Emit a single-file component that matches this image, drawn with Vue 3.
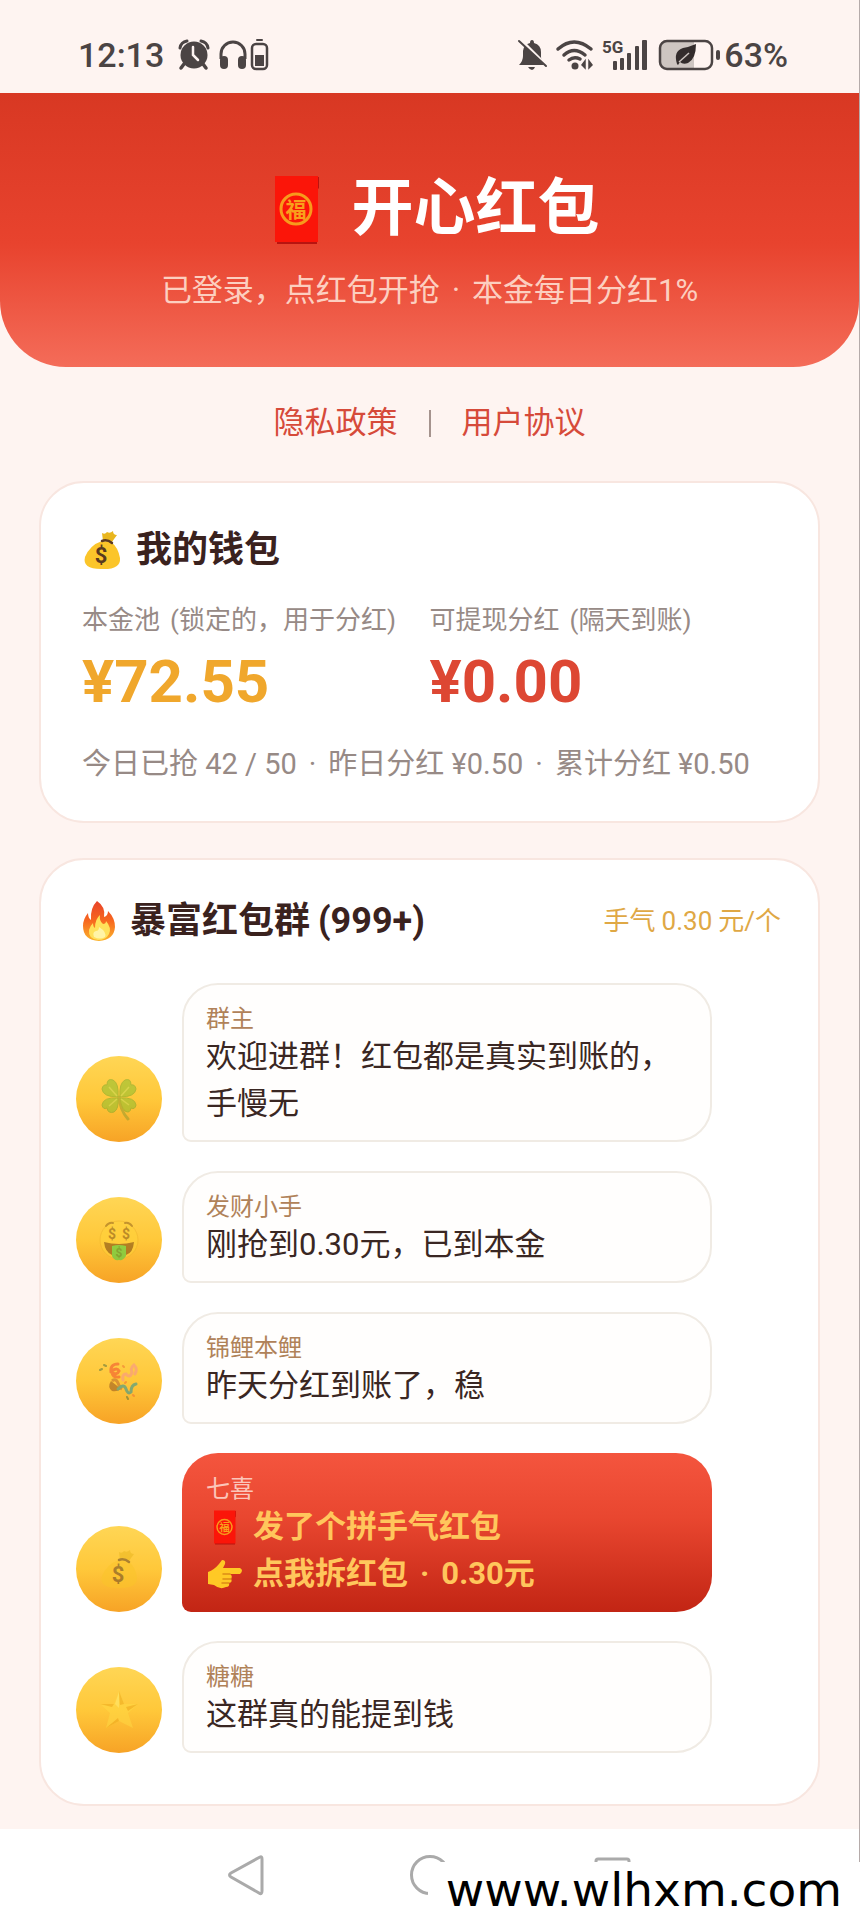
<script setup>
const messages = [
  { id: 1, name: '群主', icon: 'clover', text: '欢迎进群！红包都是真实到账的，手慢无' },
  { id: 2, name: '发财小手', icon: 'money-face', text: '刚抢到0.30元，已到本金' },
  { id: 3, name: '锦鲤本鲤', icon: 'party', text: '昨天分红到账了，稳' },
  { id: 4, name: '七喜', icon: 'bag', packet: true },
  { id: 5, name: '糖糖', icon: 'star', text: '这群真的能提到钱' },
]
</script>

<template>
  <div class="page" lang="zh-CN">
    <svg class="defs" width="0" height="0" aria-hidden="true">
      <defs>
        <linearGradient id="flameOuter" x1="0" y1="0" x2="0" y2="1">
          <stop offset="0" stop-color="#e8432a" />
          <stop offset=".5" stop-color="#f7681f" />
          <stop offset="1" stop-color="#fbb32c" />
        </linearGradient>
        <symbol id="envelope" viewBox="0 0 76 76">
          <path d="M18 6H60V17L58 19V73H18Z" fill="#b81410" />
          <rect x="16" y="5" width="43" height="66" fill="#fb1509" />
          <circle cx="37" cy="38" r="15" fill="none" stroke="#f79a1c" stroke-width="3" />
          <text x="37" y="46" text-anchor="middle" font-size="21" font-weight="700" fill="#f9a01b">福</text>
        </symbol>
        <symbol id="bag" viewBox="0 0 40 40">
          <path d="M21 11L20 3Q23 5 25 2Q28 4 31 1Q31 5 35 5Q32 9 30 12Z" fill="#e9b61e" />
          <path d="M20 11Q8 15 3 27Q0 39 19 39Q39 40 38 28Q36 17 29 12Z" fill="#fbc52a" />
          <path d="M20 11Q25 9 30 13" fill="none" stroke="#5b3a22" stroke-width="2.5" stroke-linecap="round" />
          <text x="19" y="33" text-anchor="middle" font-size="22" font-weight="700" fill="#59391f">$</text>
        </symbol>
        <symbol id="clover" viewBox="0 0 40 44">
          <path d="M20 20Q21 33 29 42" fill="none" stroke="#8e9a2d" stroke-width="3" stroke-linecap="round" />
          <g fill="#7fc02e" stroke="#6aa528" stroke-width="1">
            <path d="M19 20Q4 20 3 12Q4 7 8 8Q8 1 14 3Q20 6 19 20Z" />
            <path d="M21 20Q36 20 37 12Q36 7 32 8Q32 1 26 3Q20 6 21 20Z" />
            <path d="M19 21Q4 20 3 28Q4 33 8 31Q9 37 15 35Q20 32 19 21Z" />
            <path d="M21 21Q36 20 37 28Q36 33 32 31Q31 37 26 34Q22 30 21 21Z" />
          </g>
          <g fill="none" stroke="#b4dc58" stroke-width="1.5">
            <path d="M18 19L10 10M22 19L30 10M18 22L10 29M22 22L30 28" />
          </g>
        </symbol>
        <symbol id="money-face" viewBox="0 0 40 44">
          <circle cx="20" cy="22" r="19" fill="#ffd43a" stroke="#efb52b" />
          <path d="M7 8Q10 4 14 5M26 5Q30 4 33 8" fill="none" stroke="#8a5a17" stroke-width="2" stroke-linecap="round" />
          <text x="13" y="21" text-anchor="middle" font-size="14" font-weight="700" fill="#7a4d12">$</text>
          <text x="27" y="21" text-anchor="middle" font-size="14" font-weight="700" fill="#7a4d12">$</text>
          <path d="M5 24Q20 28 35 24Q34 35 27 37H13Q6 34 5 24Z" fill="#6b3b0e" />
          <path d="M13 28Q20 26 27 28V38Q24 43 20 42Q15 43 13 38Z" fill="#25d94a" />
          <text x="20" y="39" text-anchor="middle" font-size="12" font-weight="700" fill="#0f8d2b">$</text>
        </symbol>
        <symbol id="party" viewBox="0 0 40 40">
          <path d="M12 20Q8 26 13 30Q18 31 22 28Z" fill="#8a4a1d" />
          <path d="M13 20Q17 17 19 22T23 28" fill="none" stroke="#b5602c" stroke-width="3" />
          <path d="M19 3Q11 3 12 11Q18 15 20 10Q18 6 13 10Q13 17 20 16" fill="none" stroke="#f0402c" stroke-width="3" stroke-linecap="round" />
          <path d="M24 19Q23 13 27 13Q31 18 33 11Q31 7 35 4Q39 8 36 13" fill="none" stroke="#f78a9c" stroke-width="3" stroke-linecap="round" />
          <path d="M19 28Q25 22 27 28T32 31Q32 24 37 23" fill="none" stroke="#0b8fa9" stroke-width="3" stroke-linecap="round" />
          <path d="M5 4L7 5M1 9L3 8M28 36L29 38" stroke="#4b6b3c" stroke-width="2" stroke-linecap="round" />
          <path d="M24 5L25 6M26 22L27 21M34 34L35 35" stroke="#ee6b32" stroke-width="2" stroke-linecap="round" />
        </symbol>
        <symbol id="star" viewBox="0 0 40 40">
          <path d="M20 1L25 14L39 14L29 23L34 38L20 31L7 38L11 23L1 14L15 14Z" fill="#ffda44" />
          <path d="M20 1L21 15L25 14ZM39 14L27 17L29 21ZM1 14L13 17L15 14ZM7 38L19 28L20 31Z" fill="#edaa1c" />
          <path d="M20 2V18L16 14Z" fill="#fff27b" />
        </symbol>
      </defs>
    </svg>

    <div class="status">
      <div class="status-group">
        <span class="clock">12:13</span>
        <svg width="32" height="32" viewBox="0 0 32 32" aria-label="闹钟">
          <path d="M6 25L3 29M25 25L28 29" stroke="#4b4444" stroke-width="3.5" stroke-linecap="round" />
          <path d="M2 9Q3 3 9 2M23 2Q29 3 30 9" fill="none" stroke="#4b4444" stroke-width="3" stroke-linecap="round" />
          <circle cx="16" cy="16" r="13.5" fill="#4b4444" />
          <path d="M15 8V16L20 21" fill="none" stroke="#fef4f1" stroke-width="2.5" stroke-linecap="round" />
        </svg>
        <svg class="headset" width="50" height="32" viewBox="0 0 50 32" aria-label="耳机电量">
          <path d="M2 20V15A12 12 0 0 1 26 15V20" fill="none" stroke="#4b4444" stroke-width="3" />
          <rect x="1" y="17" width="8" height="13" rx="4" fill="#4b4444" />
          <rect x="19" y="17" width="8" height="13" rx="4" fill="#4b4444" />
          <rect x="33" y="5" width="15" height="25" rx="4" fill="none" stroke="#4b4444" stroke-width="2.5" />
          <rect x="37" y="0" width="7" height="2" rx="1" fill="#4b4444" />
          <rect x="36" y="16" width="9" height="11" fill="#4b4444" />
        </svg>
      </div>
      <div class="status-group">
        <svg width="30" height="32" viewBox="0 0 30 32" aria-label="静音">
          <path d="M15 1Q17 1 17 4Q24 6 24 13V18Q24 21 28 26H2Q6 22 6 17V12Q7 5 13 4Q13 1 15 1Z" fill="#4b4444" />
          <path d="M11 28H18Q17 31 15 31T11 28Z" fill="#4b4444" />
          <path d="M4 1L31 28" stroke="#fef4f1" stroke-width="3" />
          <path d="M2 2L29 27" stroke="#4b4444" stroke-width="2" stroke-linecap="round" />
        </svg>
        <svg class="wifi" width="38" height="32" viewBox="0 0 38 32" aria-label="无线网络">
          <g fill="none" stroke="#4b4444" stroke-width="3.5" stroke-linecap="round">
            <path d="M2 10Q18-4 35 10" />
            <path d="M8 16Q18 7 29 16" />
            <path d="M13 21Q18 17 24 20" />
          </g>
          <circle cx="19" cy="27" r="3.5" fill="#4b4444" />
          <path d="M29 22V29L26 26ZM33 29V22L36 26Z" fill="#4b4444" stroke="#4b4444" stroke-width="1.5" />
        </svg>
        <svg class="signal" width="46" height="32" viewBox="0 0 46 32" aria-label="信号">
          <text x="0" y="14" font-size="17" font-weight="700" fill="#4b4444">5G</text>
          <g fill="#4b4444">
            <rect x="11" y="22" width="4" height="9" rx="1" />
            <rect x="18" y="19" width="4" height="12" rx="1" />
            <rect x="25" y="14" width="4" height="17" rx="1" />
            <rect x="33" y="7" width="4" height="24" rx="1" />
            <rect x="40" y="1" width="5" height="30" rx="1" />
          </g>
        </svg>
        <svg class="battery" width="62" height="32" viewBox="0 0 62 32" aria-label="电池">
          <path d="M8 2H36V30H8Q2 30 2 24V8Q2 2 8 2Z" fill="#cdc5c1" />
          <rect x="2" y="2" width="52" height="28" rx="7" fill="none" stroke="#4b4444" stroke-width="2.5" />
          <rect x="58" y="11" width="4" height="10" rx="2" fill="#4b4444" />
          <path d="M19 25Q15 12 25 9Q31 8 38 5Q38 20 30 24Q25 26 22 23L20 26Z" fill="#332c2c" />
          <path d="M21 23L31 14" stroke="#cdc5c1" stroke-width="1.5" />
        </svg>
        <span class="percent">63%</span>
      </div>
    </div>

    <header class="hero">
      <h1><svg width="76" height="76" aria-hidden="true"><use href="#envelope" /></svg><span>开心红包</span></h1>
      <p class="dotted"><span>已登录，点红包开抢</span><span>·</span><span>本金每日分红1%</span></p>
    </header>

    <nav class="links">
      <a href="#privacy">隐私政策</a>
      <i class="divider"></i>
      <a href="#terms">用户协议</a>
    </nav>

    <main>
      <section class="card wallet">
        <h2><svg width="40" height="40" aria-hidden="true"><use href="#bag" /></svg>我的钱包</h2>
        <div class="balances">
          <div>
            <div class="label"><span>本金池</span><span>(锁定的，用于分红)</span></div>
            <div class="amount gold">¥72.55</div>
          </div>
          <div>
            <div class="label"><span>可提现分红</span><span>(隔天到账)</span></div>
            <div class="amount red">¥0.00</div>
          </div>
        </div>
        <p class="summary dotted"><span>今日已抢 42 / 50</span><span>·</span><span>昨日分红 ¥0.50</span><span>·</span><span>累计分红 ¥0.50</span></p>
      </section>

      <section class="card group">
        <div class="group-head">
          <h2>
            <svg width="34" height="40" viewBox="0 0 34 40" aria-hidden="true">
              <path d="M15 0Q24 6 22 16Q26 15 26 10Q33 17 33 26Q32 39 17 40Q1 39 1 25Q1 18 6 12Q6 17 9 19Q8 7 15 0Z" fill="url(#flameOuter)" />
              <path d="M18 14Q17 20 21 23Q24 23 24 20Q30 27 27 33Q24 39 16 39Q6 38 7 29Q8 25 11 22Q11 26 13 27Q13 18 18 14Z" fill="#ffe15a" />
              <path d="M17 26Q25 31 23 36Q18 39 12 36Q10 31 14 30Q17 30 17 26Z" fill="#fff4a6" />
            </svg>
            <span class="group-name"><span>暴富红包群</span><span>(999+)</span></span>
          </h2>
          <span class="luck"><span>手气</span><span>0.30</span><span>元/个</span></span>
        </div>
        <ul class="messages">
          <li v-for="m in messages" :key="m.id">
            <span class="avatar">
              <svg width="40" height="44" aria-hidden="true"><use :href="'#' + m.icon" /></svg>
            </span>
            <button v-if="m.packet" type="button" class="bubble packet">
              <span class="name">{{ m.name }}</span>
              <span class="line"><svg width="38" height="38" aria-hidden="true"><use href="#envelope" /></svg>发了个拼手气红包</span>
              <span class="line"><svg width="38" height="38" viewBox="0 0 38 38" aria-hidden="true">
                <path d="M2 17Q8 15 13 9L16 5Q20 5 19 9L17 13H34Q38 15 34 19H24Q27 21 25 24Q27 27 23 28Q24 32 20 32Q14 35 8 30L2 29Z" fill="#ffc925" />
                <path d="M17 19H24M17 24H25M16 28H23" fill="none" stroke="#dc8c16" stroke-width="1.5" stroke-linecap="round" />
              </svg><span class="dotted"><span>点我拆红包</span><span>·</span><span>0.30元</span></span></span>
            </button>
            <div v-else class="bubble">
              <span class="name">{{ m.name }}</span>
              <span class="text">{{ m.text }}</span>
            </div>
          </li>
        </ul>
      </section>
    </main>

    <footer class="system-nav">
      <button type="button" aria-label="返回">
        <svg width="44" height="44" viewBox="0 0 44 44"><path d="M36 4Q38 3 38 6V38Q38 42 35 40L7 24Q4 22 7 20Z" fill="none" stroke="#aaa" stroke-width="3" /></svg>
      </button>
      <button type="button" aria-label="主页">
        <svg width="44" height="44" viewBox="0 0 44 44"><circle cx="22" cy="22" r="18.5" fill="none" stroke="#aaa" stroke-width="3" /></svg>
      </button>
      <button type="button" aria-label="最近任务">
        <svg width="44" height="44" viewBox="0 0 44 44"><rect x="4" y="6" width="33" height="33" rx="2" fill="none" stroke="#aaa" stroke-width="3" /></svg>
      </button>
      <div class="site-mark">www.wlhxm.com</div>
    </footer>
  </div>
</template>

<style>
body {
  margin: 0;
  background: #fff;
}
</style>

<style scoped>
.page {
  border-right: 1px solid #b5abaa;
  background: #fef4f1;
  color: #3a221e;
  font-family: Roboto, "Noto Sans CJK SC", sans-serif;
  box-sizing: border-box;
}
h1, h2, p, ul {
  margin: 0;
  padding: 0;
}
svg {
  flex: none;
  overflow: visible;
}
.defs {
  position: absolute;
}
.dotted {
  display: flex;
  gap: 12px;
  white-space: nowrap;
}
.status {
  display: flex;
  justify-content: space-between;
  align-items: center;
  height: 93px;
  padding: 16px 71px 0 78px;
  box-sizing: border-box;
  color: #4b4444;
}
.status-group {
  display: flex;
  align-items: center;
}
.clock, .percent {
  font-size: 34px;
  line-height: 40px;
  font-weight: 500;
}
.clock {
  margin-right: 14px;
}
.headset, .wifi {
  margin-left: 9px;
}
.signal {
  margin-left: 8px;
}
.battery {
  margin: 0 4px 0 10px;
}
.hero {
  padding: 76px 24px 54px;
  border-radius: 0 0 66px 66px;
  background: linear-gradient(#d83823, #e8432e 55%, #f46c59);
}
.hero h1 {
  display: flex;
  justify-content: center;
  align-items: center;
  gap: 16px;
  color: #fff;
  font-size: 62px;
  line-height: 80px;
  font-weight: 700;
}
.hero p {
  justify-content: center;
  margin-top: 20px;
  color: #fccfc0;
  font-size: 31px;
  line-height: 44px;
}
.links {
  display: flex;
  justify-content: center;
  align-items: center;
  padding: 34px 24px 36px;
  font-size: 31px;
  line-height: 44px;
}
.links a {
  color: #d64a3a;
  text-decoration: none;
}
.divider {
  width: 2px;
  height: 27px;
  margin: 0 31px;
  background: #a5938e;
}
main {
  display: flex;
  flex-direction: column;
  gap: 35px;
  padding: 0 39px 23px;
}
.card {
  border: 2px solid #f8e6e0;
  border-radius: 45px;
  background: #fff;
}
.card h2 {
  display: flex;
  align-items: center;
  gap: 14px;
  font-size: 36px;
  line-height: 44px;
  font-weight: 700;
}
.wallet {
  padding: 45px 41px 37px;
}
.balances {
  display: grid;
  grid-template-columns: 1fr 1fr;
  margin-top: 30px;
}
.label {
  display: flex;
  gap: 10px;
  color: #978a86;
  font-size: 26px;
  line-height: 36px;
  white-space: nowrap;
}
.amount {
  margin-top: 8px;
  font-size: 60px;
  line-height: 72px;
  font-weight: 700;
}
.gold {
  color: #f0a72c;
}
.red {
  color: #dd4733;
}
.summary {
  margin-top: 26px;
  color: #978a86;
  font-size: 29px;
  line-height: 40px;
}
.group {
  padding: 39px 35px 51px;
}
.group-head {
  display: flex;
  justify-content: space-between;
  align-items: center;
  padding: 0 2px 0 6px;
}
.group-name {
  display: flex;
  gap: 8px;
}
.luck {
  display: flex;
  gap: 6px;
  color: #dfa845;
  font-size: 26px;
  line-height: 36px;
}
.messages {
  display: flex;
  flex-direction: column;
  gap: 29px;
  margin-top: 40px;
  list-style: none;
}
.messages li {
  display: flex;
  align-items: flex-end;
  gap: 20px;
}
.avatar {
  display: flex;
  flex: none;
  justify-content: center;
  align-items: center;
  width: 86px;
  height: 86px;
  border-radius: 50%;
  background: linear-gradient(#ffd655, #ffc83a 50%, #f7a326);
}
.avatar svg {
  opacity: .5;
}
.bubble {
  display: flex;
  flex-direction: column;
  box-sizing: border-box;
  width: 75%;
  padding: 21px 22px 13px;
  border: 2px solid #f0ebe4;
  border-radius: 36px 36px 36px 9px;
  background: #fffefd;
  color: #3a2723;
  font-family: inherit;
  font-size: 31px;
  line-height: 47px;
  text-align: left;
}
.name {
  color: #b08259;
  font-size: 24px;
  line-height: 27px;
}
.packet {
  border: 0;
  padding: 23px 24px 15px;
  background: linear-gradient(#f4553e, #e94730 40%, #c22514);
  color: #ffc65c;
  font-weight: 700;
}
.packet .name {
  color: #fbc6ba;
  font-weight: 400;
}
.line {
  display: flex;
  align-items: center;
  gap: 9px;
}
.system-nav {
  position: relative;
  display: flex;
  justify-content: center;
  gap: 124px;
  padding: 16px 0 15px;
  background: #fff;
}
.system-nav button {
  display: flex;
  justify-content: center;
  align-items: center;
  width: 60px;
  height: 60px;
  margin: 0;
  padding: 0;
  border: 0;
  background: none;
}
.site-mark {
  position: absolute;
  right: -1px;
  bottom: 0;
  padding: 1px 18px 3px;
  background: #fff;
  color: #000;
  font-family: "DejaVu Sans", sans-serif;
  font-size: 47px;
  line-height: 54px;
}
</style>
